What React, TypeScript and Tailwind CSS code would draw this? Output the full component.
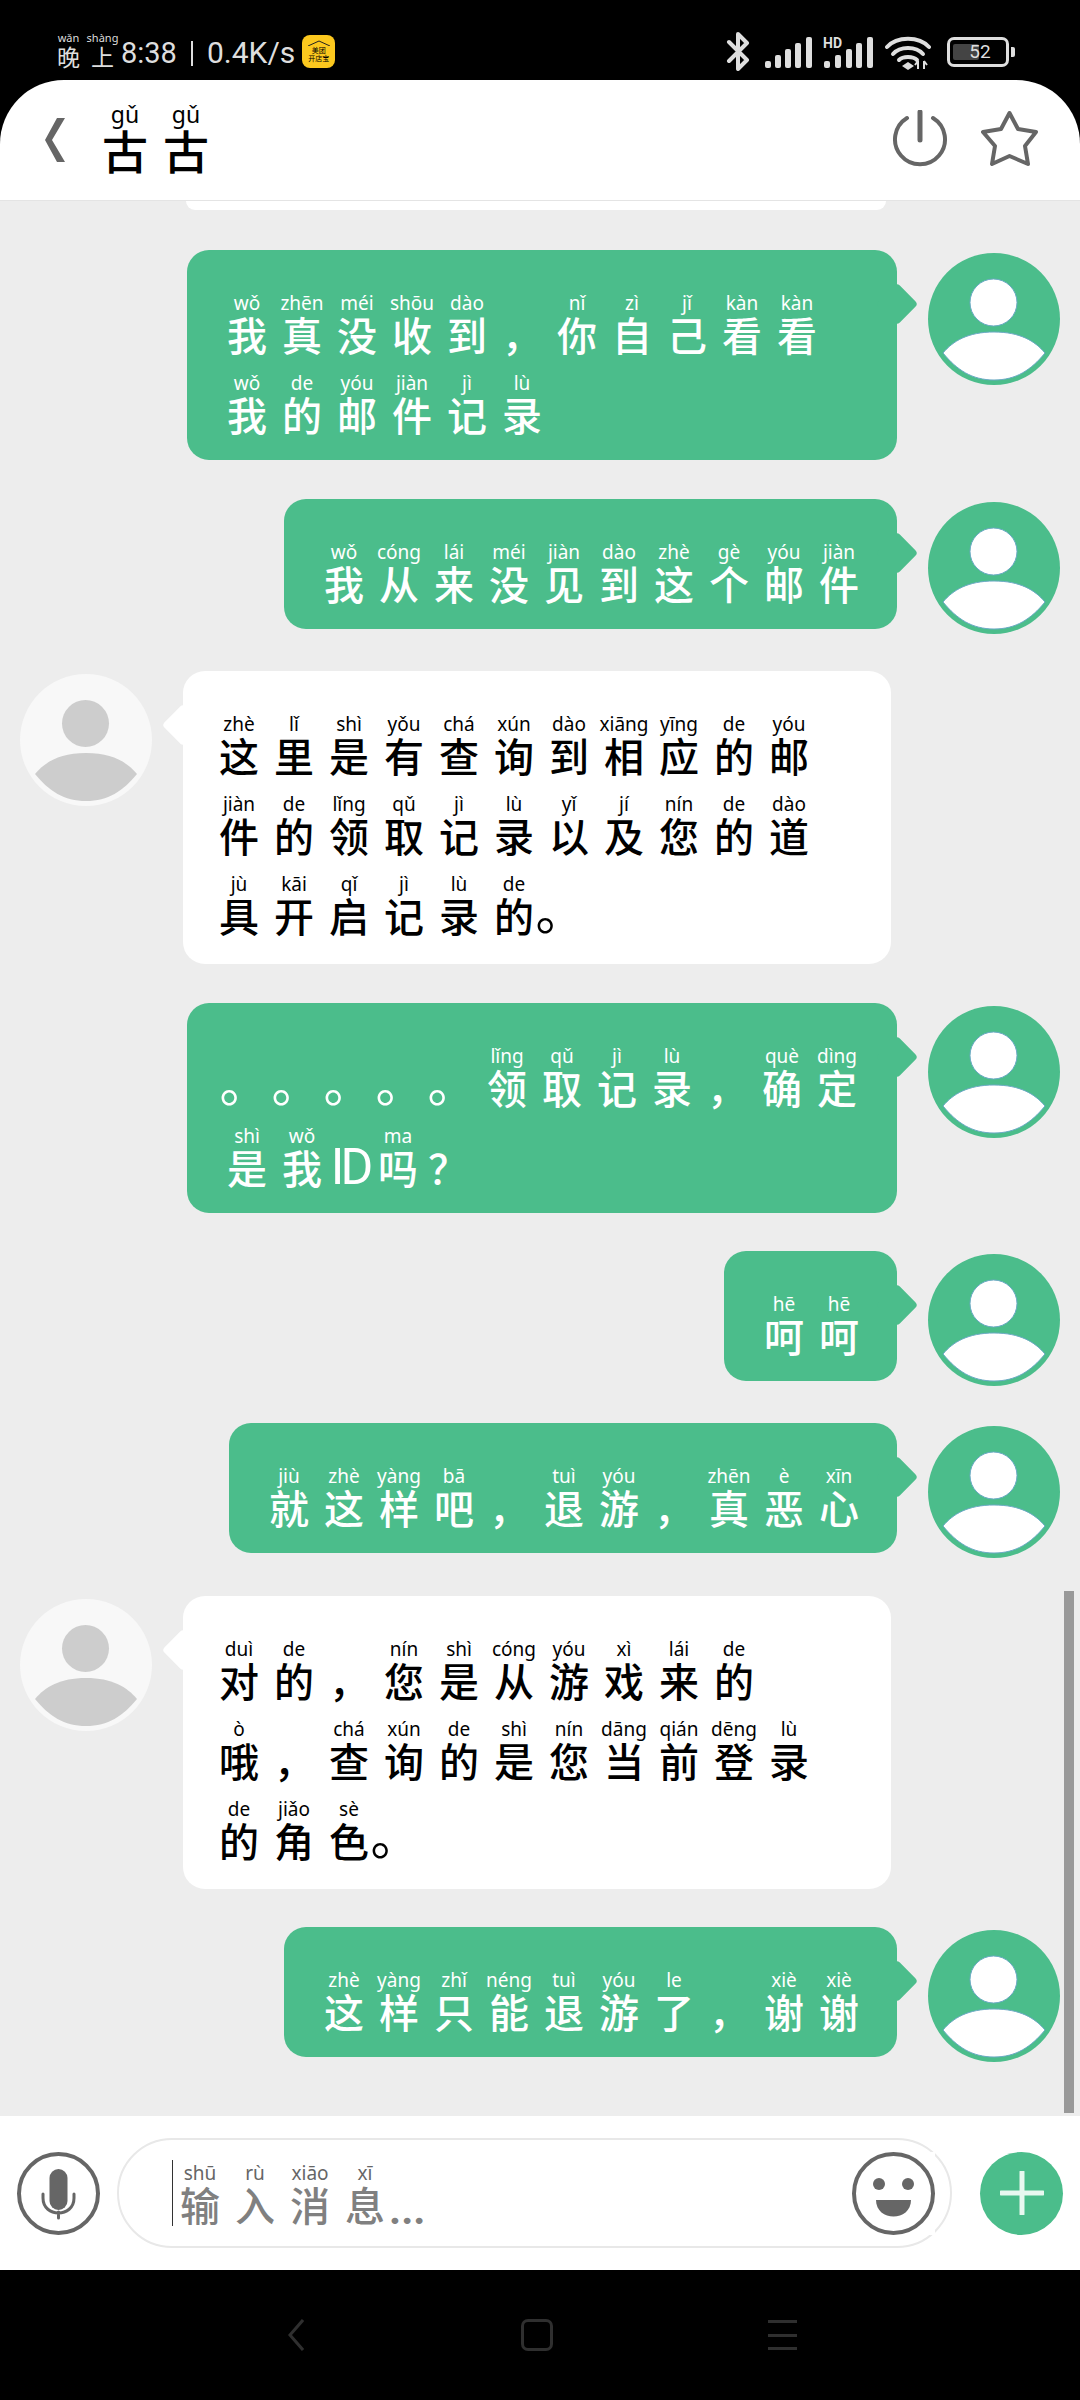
const GREEN = "#4bbd8b";

type Msg = {
  side: "left" | "right";
  lines: string[];
  wide?: boolean;
  gap: string;
};

const messages: Msg[] = [
  {
    side: "right",
    wide: true,
    gap: "mt-[40px]",
    lines: ["我|wǒ 真|zhēn 没|méi 收|shōu 到|dào ， 你|nǐ 自|zì 己|jǐ 看|kàn 看|kàn", "我|wǒ 的|de 邮|yóu 件|jiàn 记|jì 录|lù"],
  },
  {
    side: "right",
    gap: "mt-[39px]",
    lines: ["我|wǒ 从|cóng 来|lái 没|méi 见|jiàn 到|dào 这|zhè 个|gè 邮|yóu 件|jiàn"],
  },
  {
    side: "left",
    wide: true,
    gap: "mt-[37px]",
    lines: [
      "这|zhè 里|lǐ 是|shì 有|yǒu 查|chá 询|xún 到|dào 相|xiāng 应|yīng 的|de 邮|yóu",
      "件|jiàn 的|de 领|lǐng 取|qǔ 记|jì 录|lù 以|yǐ 及|jí 您|nín 的|de 道|dào",
      "具|jù 开|kāi 启|qǐ 记|jì 录|lù 的|de 。",
    ],
  },
  {
    side: "right",
    wide: true,
    gap: "mt-[39px]",
    lines: ["。 。 。 。 。 领|lǐng 取|qǔ 记|jì 录|lù ， 确|què 定|dìng", "是|shì 我|wǒ ID 吗|ma ？"],
  },
  {
    side: "right",
    gap: "mt-[38px]",
    lines: ["呵|hē 呵|hē"],
  },
  {
    side: "right",
    gap: "mt-[37px]",
    lines: ["就|jiù 这|zhè 样|yàng 吧|bā ， 退|tuì 游|yóu ， 真|zhēn 恶|è 心|xīn"],
  },
  {
    side: "left",
    wide: true,
    gap: "mt-[38px]",
    lines: [
      "对|duì 的|de ， 您|nín 是|shì 从|cóng 游|yóu 戏|xì 来|lái 的|de",
      "哦|ò ， 查|chá 询|xún 的|de 是|shì 您|nín 当|dāng 前|qián 登|dēng 录|lù",
      "的|de 角|jiǎo 色|sè 。",
    ],
  },
  {
    side: "right",
    gap: "mt-[38px]",
    lines: ["这|zhè 样|yàng 只|zhǐ 能|néng 退|tuì 游|yóu 了|le ， 谢|xiè 谢|xiè"],
  },
];

function Cell({ token, self }: { token: string; self: boolean }) {
  const [han, pinyin] = token.split("|");
  if (han === "ID") {
    return (
      <div className="flex w-[26px] flex-col items-center">
        <div className="h-[20px]" />
        <div className="mt-px h-[40px] whitespace-nowrap font-['Roboto',sans-serif] text-[50px] leading-[40px] tracking-[-4px]">ID</div>
      </div>
    );
  }
  if (han === "。") {
    return (
      <div className="flex w-[37px] flex-col items-center">
        <div className="h-[20px]" />
        <div className={`relative top-[-7px] mt-px h-[40px] text-[50px] leading-[40px] ${self ? "left-[-1px]" : "left-[-7px]"}`}>{han}</div>
      </div>
    );
  }
  return (
    <div className={`flex w-[40px] flex-col items-center ${han === "？" ? "ml-[-5px]" : ""}`}>
      <div className="h-[20px] whitespace-nowrap font-['Noto_Sans',sans-serif] text-[19px] leading-[20px]">{pinyin}</div>
      <div className="mt-px h-[40px] text-[40px] font-medium leading-[40px]">{han}</div>
    </div>
  );
}

function Avatar({ side }: { side: "left" | "right" }) {
  const self = side === "right";
  const fg = self ? "#ffffff" : "#cdcdcd";
  return (
    <svg viewBox="0 0 132 132" className="mt-[3px] h-[132px] w-[132px] shrink-0">
      <circle cx="66" cy="66" r="66" fill={self ? GREEN : "#f8f8f8"} />
      <ellipse cx="65.5" cy="49.5" rx="23.5" ry="23.5" fill={fg} stroke={self ? "#6aa9c4" : "none"} strokeWidth="1" />
      <path d="M15 100 C25 88 40 79 66 79 C92 79 107 88 117 100 C103 117 88 127 66 127 C44 127 29 117 15 100 Z" fill={fg} stroke={self ? "#6aa9c4" : "none"} strokeWidth="1" />
    </svg>
  );
}

function Bubble({ msg }: { msg: Msg }) {
  const self = msg.side === "right";
  return (
    <div
      className={`relative rounded-[22px] pt-[43px] ${
        self
          ? `bg-[#4bbd8b] pb-[26px] pl-[40px] pr-[38px] text-white ${msg.wide ? "w-[710px]" : ""}`
          : "w-[708px] bg-white pb-[29px] pl-[36px] text-black"
      }`}
    >
      <div
        className={`absolute top-[39px] h-[30px] w-[30px] rotate-45 rounded-[4px] ${
          self ? "right-[-15px] bg-[#4bbd8b]" : "left-[-15px] bg-white"
        }`}
      />
      <div className="relative flex flex-col gap-[19px]">
        {msg.lines.map((line, i) => (
          <div key={i} className="flex gap-[15px]">
            {line.split(" ").map((t, j) => (
              <Cell key={j} token={t} self={self} />
            ))}
          </div>
        ))}
      </div>
    </div>
  );
}

function Message({ msg }: { msg: Msg }) {
  if (msg.side === "left") {
    return (
      <div className={`flex items-start gap-[31px] pl-[20px] ${msg.gap}`}>
        <Avatar side="left" />
        <Bubble msg={msg} />
      </div>
    );
  }
  return (
    <div className={`flex items-start justify-end gap-[31px] pr-[20px] ${msg.gap}`}>
      <Bubble msg={msg} />
      <Avatar side="right" />
    </div>
  );
}

function StatusBar() {
  return (
    <div className="flex h-[80px] items-start justify-between pl-[57px] pr-[65px] text-[#dedede]">
      <div className="flex items-end pt-[31px]">
        <div className="flex gap-[11px]">
          <div className="flex w-[23px] flex-col items-center">
            <span className="h-[13px] font-['Noto_Sans',sans-serif] text-[11px] leading-[13px]">wǎn</span>
            <span className="h-[24px] text-[23px] leading-[24px]">晚</span>
          </div>
          <div className="flex w-[23px] flex-col items-center">
            <span className="h-[13px] font-['Noto_Sans',sans-serif] text-[11px] leading-[13px]">shàng</span>
            <span className="h-[24px] text-[23px] leading-[24px]">上</span>
          </div>
        </div>
        <span className="ml-[7px] font-['Roboto',sans-serif] text-[29px] leading-[30px]">8:38</span>
        <div className="mb-[2px] ml-[14px] h-[25px] w-[2px] bg-[#dedede]" />
        <span className="ml-[14px] font-['Roboto',sans-serif] text-[30px] leading-[30px]">0.4K/s</span>
        <div className="ml-[7px] flex h-[33px] w-[33px] flex-col items-center rounded-[8px] bg-[#fcc81e] pt-[5px] text-black">
          <svg viewBox="0 0 24 6" className="h-[6px] w-[24px]">
            <path d="M1 6 L12 1 L23 6" fill="none" stroke="#222" strokeWidth="1" />
          </svg>
          <span className="text-[7px] leading-[8px]">美团</span>
          <span className="text-[7px] leading-[8px]">开店宝</span>
        </div>
      </div>
      <div className="flex items-start pt-[32px]">
        <svg viewBox="0 0 24 39" className="h-[39px] w-[24px]">
          <path d="M3 10 L21 28 L12 37 V2 L21 11 L3 29" fill="none" stroke="#dedede" strokeWidth="4" strokeLinejoin="round" strokeLinecap="round" />
        </svg>
        <svg viewBox="0 0 47 31" className="ml-[15px] mt-[5px] h-[31px] w-[47px]">
          <rect x="0" y="24" width="6" height="7" rx="2" fill="#dedede" />
          <rect x="10" y="18" width="6" height="13" rx="2" fill="#dedede" />
          <rect x="20" y="12" width="6" height="19" rx="2" fill="#dedede" />
          <rect x="30" y="6" width="6" height="25" rx="2" fill="#dedede" />
          <rect x="41" y="0" width="6" height="31" rx="2" fill="#dedede" />
        </svg>
        <div className="relative ml-[12px] mt-[5px] h-[31px] w-[49px]">
          <span className="absolute left-[-1px] top-[-1px] font-['Roboto',sans-serif] text-[14px] font-bold leading-[14px]">HD</span>
          <svg viewBox="0 0 49 31" className="h-[31px] w-[49px]">
            <rect x="0" y="24" width="6" height="7" rx="2" fill="#dedede" />
            <rect x="11" y="18" width="6" height="13" rx="2" fill="#dedede" />
            <rect x="22" y="12" width="6" height="19" rx="2" fill="#dedede" />
            <rect x="32" y="6" width="6" height="25" rx="2" fill="#dedede" />
            <rect x="43" y="0" width="6" height="31" rx="2" fill="#dedede" />
          </svg>
        </div>
        <svg viewBox="0 0 46 34" className="ml-[12px] mt-[4px] h-[34px] w-[46px]">
          <path d="M2 11 C12 0 34 0 44 11" fill="none" stroke="#dedede" strokeWidth="4" strokeLinecap="round" />
          <path d="M8 18 C15 10 31 10 38 18" fill="none" stroke="#dedede" strokeWidth="4" strokeLinecap="round" />
          <path d="M14 24 C18 20 28 20 32 24" fill="none" stroke="#dedede" strokeWidth="4" strokeLinecap="round" />
          <path d="M17 30 L23 26 L29 30 L23 34 Z" fill="#dedede" />
          <path d="M33 33 V25 M39 33 V25 M30 29 L33 25 M39 25 L42 29" fill="none" stroke="#dedede" strokeWidth="2" />
        </svg>
        <div className="ml-[16px] mt-[5px] flex items-center">
          <div className="relative flex h-[30px] w-[62px] items-center justify-center rounded-[7px] border-[3px] border-[#dedede]">
            <div className="absolute bottom-[4px] left-[3px] top-[4px] w-[26px] rounded-[2px] bg-[#444]" />
            <span className="relative pl-[4px] font-['Roboto',sans-serif] text-[19px] leading-[20px]">52</span>
          </div>
          <div className="ml-[2px] h-[10px] w-[4px] rounded-r-[2px] bg-[#dedede]" />
        </div>
      </div>
    </div>
  );
}

function Header() {
  return (
    <div className="flex h-[121px] items-start rounded-t-[64px] border-b-[1px] border-[#e4e4e4] bg-white">
      <svg viewBox="0 0 20 44" className="ml-[45px] mt-[38px] h-[44px] w-[20px]">
        <path d="M12 0 H20 L7 22 L20 44 H12 L0 22 Z" fill="#666" />
      </svg>
      <div className="ml-[37px] mt-[22px] flex gap-[15px] text-black">
        {["古", "古"].map((c, i) => (
          <div key={i} className="flex w-[46px] flex-col items-center">
            <span className="h-[24px] font-['Noto_Sans',sans-serif] text-[23px] leading-[24px]">gǔ</span>
            <span className="h-[46px] text-[46px] font-medium leading-[46px]">{c}</span>
          </div>
        ))}
      </div>
      <svg viewBox="0 0 56 58" className="ml-auto mt-[30px] h-[58px] w-[56px]">
        <path d="M15 8 A25 25 0 1 0 41 8" fill="none" stroke="#666" strokeWidth="4" strokeLinecap="round" />
        <path d="M28 2 V30" fill="none" stroke="#666" strokeWidth="5" strokeLinecap="round" />
      </svg>
      <svg viewBox="0 0 57 55" className="ml-[33px] mr-[42px] mt-[31px] h-[55px] w-[57px]">
        <path
          d="M28.5 2 L37 18 L55 21 L44 35 L47 53 L28.5 45 L11 53 L14 35 L2 21 L20 18 Z"
          fill="none"
          stroke="#666"
          strokeWidth="4"
          strokeLinejoin="round"
        />
      </svg>
    </div>
  );
}

function InputBar() {
  const hint = ["输|shū", "入|rù", "消|xiāo", "息|xī"];
  return (
    <div className="flex h-[154px] items-center bg-white pl-[17px]">
      <svg viewBox="0 0 83 83" className="h-[83px] w-[83px]">
        <circle cx="41.5" cy="41.5" r="39.5" fill="none" stroke="#666" strokeWidth="4" />
        <rect x="32.5" y="17" width="18" height="41" rx="9" fill="#666" />
        <path d="M26 42 V46 C26 66 57 66 57 46 V42 M41.5 60 V66" fill="none" stroke="#666" strokeWidth="3" strokeLinecap="round" />
      </svg>
      <div className="ml-[17px] flex h-[110px] w-[835px] items-center rounded-full border-2 border-[#e8e8e8] pl-[53px]">
        <div className="h-[66px] w-px bg-[#333]" />
        <div className="ml-[7px] flex items-end gap-[15px] text-[#808080]">
          {hint.map((t) => {
            const [h, p] = t.split("|");
            return (
              <div key={h} className="flex w-[40px] flex-col items-center">
                <span className="h-[20px] font-['Noto_Sans',sans-serif] text-[19px] leading-[20px] text-[#666]">{p}</span>
                <span className="mt-px h-[40px] text-[40px] font-medium leading-[40px]">{h}</span>
              </div>
            );
          })}
        </div>
        <span className="ml-[4px] mt-[34px] font-['Roboto',sans-serif] text-[42px] font-bold leading-[32px] text-[#808080]">...</span>
      </div>
      <svg viewBox="0 0 83 83" className="ml-[-100px] h-[83px] w-[83px] bg-white">
        <circle cx="41.5" cy="41.5" r="39.5" fill="#fff" stroke="#666" strokeWidth="4" />
        <ellipse cx="27" cy="32" rx="6" ry="6" fill="#666" />
        <ellipse cx="56" cy="32" rx="6" ry="6" fill="#666" />
        <path d="M24 48 H59 C59 70 24 70 24 48 Z" fill="#666" />
      </svg>
      <div className="ml-[45px] flex h-[83px] w-[83px] items-center justify-center rounded-full bg-[#4bbd8b]">
        <svg viewBox="0 0 44 44" className="h-[44px] w-[44px]">
          <path d="M22 1 V43 M1 22 H43" stroke="#e8f8f0" strokeWidth="5" strokeLinecap="round" />
        </svg>
      </div>
    </div>
  );
}

function NavBar() {
  return (
    <div className="flex h-[130px] items-start bg-black pt-[49px]">
      <svg viewBox="0 0 16 32" className="ml-[288px] h-[32px] w-[16px]">
        <path d="M15 1 L2 16 L15 31" fill="none" stroke="#2f2f2f" strokeWidth="3" />
      </svg>
      <div className="ml-[217px] h-[32px] w-[32px] rounded-[7px] border-[3px] border-[#2f2f2f]" />
      <div className="ml-[215px] mt-px flex h-[30px] w-[29px] flex-col justify-between">
        <div className="h-[3px] bg-[#2f2f2f]" />
        <div className="h-[3px] bg-[#2f2f2f]" />
        <div className="h-[3px] bg-[#2f2f2f]" />
      </div>
    </div>
  );
}

export default function App() {
  return (
    <div className="flex h-[2400px] w-[1080px] flex-col overflow-hidden bg-black font-['Noto_Sans_CJK_SC','Noto_Sans',sans-serif]">
      <StatusBar />
      <Header />
      <div className="relative flex-1 overflow-hidden bg-[#ededed]">
        <div className="ml-[186px] h-[9px] w-[700px] rounded-b-[20px] bg-white" />
        {messages.map((m, i) => (
          <Message key={i} msg={m} />
        ))}
        <div className="absolute right-[6px] top-[1390px] h-[522px] w-[10px] bg-[#999]" />
      </div>
      <InputBar />
      <NavBar />
    </div>
  );
}
